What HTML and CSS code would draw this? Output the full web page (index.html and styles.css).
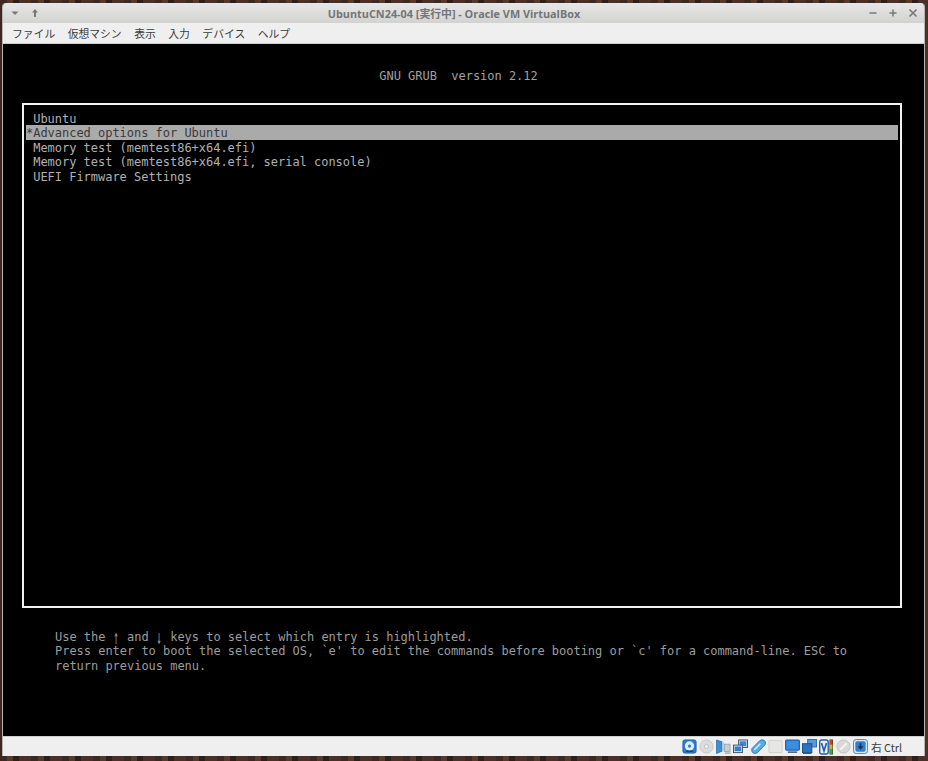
FILE: index.html
```html
<!DOCTYPE html>
<html lang="ja">
<head>
<meta charset="utf-8">
<title>UbuntuCN24-04 [実行中] - Oracle VM VirtualBox</title>
<link rel="stylesheet" href="styles.css">
</head>
<body>
<div class="window">
  <header class="titlebar">
    <div class="wm-left">
      <svg class="wm" viewBox="0 0 10 10"><path d="M1.500 3.500h7L5 7z" fill="#77797c"/></svg>
      <svg class="wm" viewBox="0 0 10 10"><path d="M5 1L8 4.500H6V9H4V4.500H2z" fill="#77797c"/></svg>
    </div>
    <div class="title">UbuntuCN24-04 [実行中] - Oracle VM VirtualBox</div>
    <div class="wm-right">
      <svg class="wm" viewBox="0 0 10 10"><path d="M1.500 5h7" stroke="#77797c" stroke-width="1.500"/></svg>
      <svg class="wm" viewBox="0 0 10 10"><path d="M1.500 5h7M5 1.500v7" stroke="#77797c" stroke-width="1.500"/></svg>
      <svg class="wm" viewBox="0 0 10 10"><path d="M1.500 1.500l7 7M8.500 1.500l-7 7" stroke="#77797c" stroke-width="1.700"/></svg>
    </div>
  </header>
  <nav class="menubar">
    <span>ファイル</span><span>仮想マシン</span><span>表示</span><span>入力</span><span>デバイス</span><span>ヘルプ</span>
  </nav>
  <main class="screen">
    <div class="grub-title">GNU GRUB  version 2.12</div>
    <section class="menu-box">
      <div class="entry">Ubuntu</div>
      <div class="entry selected">*Advanced options for Ubuntu</div>
      <div class="entry">Memory test (memtest86+x64.efi)</div>
      <div class="entry">Memory test (memtest86+x64.efi, serial console)</div>
      <div class="entry">UEFI Firmware Settings</div>
    </section>
    <div class="help">Use the <span class="arrow">↑</span> and <span class="arrow">↓</span> keys to select which entry is highlighted.
Press enter to boot the selected OS, `e' to edit the commands before booting or `c' for a command-line. ESC to
return previous menu.</div>
  </main>
  <footer class="statusbar">
    <svg class="ico" viewBox="0 0 16 16"><rect x="1" y="1" width="14" height="14" rx="2" fill="#2f7fd0" stroke="#1c5ea8"/><circle cx="8" cy="7.500" r="5" fill="#dcebf8"/><circle cx="8" cy="7.500" r="1.700" fill="#2f7fd0"/><path d="M4 13h8" stroke="#123f7c" stroke-width="1.500"/></svg>
    <svg class="ico" viewBox="0 0 16 16"><circle cx="8" cy="8" r="7" fill="#dcdcda" stroke="#c8c8c6"/><circle cx="8" cy="8" r="2.200" fill="#f2f2f0" stroke="#bdbdbb"/></svg>
    <svg class="ico" viewBox="0 0 16 16"><path d="M0.500 1l6 2v10l-6 2.500z" fill="#3d8ed8" stroke="#1f639f" stroke-width=".7"/><path d="M6.500 3h2v10h-2z" fill="#a9cde9"/><rect x="9" y="5.500" width="6" height="8" fill="#c9cdd0" stroke="#8d9599" stroke-width=".7"/><path d="M9.500 15h6" stroke="#7b8a96"/></svg>
    <svg class="ico" viewBox="0 0 16 16"><rect x="6" y="1" width="9.500" height="8" fill="#cfe0ef" stroke="#3f4d5c"/><rect x="7.200" y="2.500" width="7" height="5" fill="#3b86d3"/><rect x="0.500" y="6.500" width="9.500" height="8" fill="#dfe8f0" stroke="#3f4d5c"/><rect x="1.700" y="8" width="7" height="5" fill="#2f7fd0"/></svg>
    <svg class="ico" viewBox="0 0 16 16"><path d="M0.800 10.500L9 2q2.500-2 5-.6t1 4.600L7 14.500q-2.500 1.500-4.500.5t-1.700-4.500z" fill="#57ace6" stroke="#2b75b5"/><path d="M3.500 11.500l6.500-6.500" stroke="#d8eefb" stroke-width="1.500"/></svg>
    <svg class="ico" viewBox="0 0 16 16"><rect x="1" y="1.500" width="14" height="13" rx="1" fill="#e6e6e4" stroke="#cfcfcd"/></svg>
    <svg class="ico" viewBox="0 0 16 16"><rect x="0.500" y="1" width="15" height="11" rx="1" fill="#2f7fd0" stroke="#1c5ea8"/><rect x="2" y="2.500" width="12" height="8" fill="#3a8fe2"/><path d="M3 14h10" stroke="#34506c" stroke-width="1.500"/></svg>
    <svg class="ico" viewBox="0 0 16 16"><rect x="6" y="0.500" width="9.500" height="8" fill="#5b97d4" stroke="#2d6cab"/><rect x="0.500" y="5" width="10" height="9.500" fill="#2872bf" stroke="#174f8c"/><path d="M1 15.500h9" stroke="#2c4a68"/></svg>
    <svg class="ico-wide" viewBox="0 0 14 16"><rect x="0.700" y="1" width="8.500" height="14" rx="2" fill="#e8eff7" stroke="#2a5fa8" stroke-width="1.400"/><path d="M2.500 4l2.500 8 2.500-8" fill="none" stroke="#2a5fa8" stroke-width="1.700"/><rect x="10.500" y="0.500" width="3.500" height="15" fill="#333"/><rect x="11" y="1" width="2.500" height="4.500" fill="#c9402c"/><rect x="11" y="5.500" width="2.500" height="4.500" fill="#dcae2c"/><rect x="11" y="10" width="2.500" height="5" fill="#4aa23c"/></svg>
    <svg class="ico" viewBox="0 0 16 16"><circle cx="8" cy="8" r="7" fill="#d9d9d7" stroke="#c4c4c2"/><path d="M4.500 11.500l7-7" stroke="#f2f2f0" stroke-width="2.500"/></svg>
    <svg class="ico" viewBox="0 0 16 16"><rect x="0.500" y="0.500" width="15" height="15" rx="3" fill="#d6e7f6" stroke="#3b86cf"/><rect x="2.500" y="2.500" width="11" height="11" rx="2" fill="#2f7fd0"/><path d="M8 4.500v4" stroke="#12315a" stroke-width="1.800"/><path d="M5 7.800h6L8 11.500z" fill="#12315a"/></svg>
    <span class="hostkey">右 Ctrl</span>
  </footer>
</div>
</body>
</html>
```
FILE: styles.css
```css
html, body {
  margin: 0;
  padding: 0;
  height: 100%;
}
body {
  background: repeating-linear-gradient(90deg, #3d2822 0 7px, #57392c 7px 13px, #2f1f1b 13px 19px, #4a3026 19px 31px);
  overflow: hidden;
  padding: 3px 3px 5px 2px;
  box-sizing: border-box;
  width: 928px;
  height: 761px;
}
.window {
  height: 753px;
  display: flex;
  flex-direction: column;
  border-radius: 4px 4px 0 0;
  border-left: 1px solid #b9b4b1;
  border-right: 1px solid #b9b4b1;
  overflow: hidden;
  font-family: "Noto Sans CJK JP", "Noto Sans", sans-serif;
}
.titlebar {
  height: 20px;
  flex: none;
  display: flex;
  align-items: center;
  justify-content: space-between;
  position: relative;
  padding: 0 6px 0 7px;
  background: linear-gradient(#e7e7e7, #d2d2d0);
}
.wm-left, .wm-right {
  display: flex;
  align-items: center;
  gap: 10px;
}
.wm {
  width: 10px;
  height: 10px;
  display: block;
}
.title {
  position: absolute;
  left: 0;
  right: 0;
  top: 1px;
  padding-right: 19px;
  text-align: center;
  font-family: "Open Sans", "Noto Sans CJK SC", sans-serif;
  font-size: 10.850px;
  line-height: 20px;
  font-weight: 700;
  color: #737578;
}
.menubar {
  height: 20px;
  flex: none;
  display: flex;
  align-items: center;
  gap: 12.500px;
  padding: 0 0 0 9px;
  background: #efefef;
  border-bottom: 1px solid #c8c8c6;
  font-size: 10.800px;
  color: #3c3c3c;
}
.screen {
  flex: 1;
  min-height: 0;
  background: #000;
  color: #aaa;
  font-family: "DejaVu Sans Mono", "Liberation Mono", monospace;
  font-size: 12px;
  letter-spacing: -0.024px;
  line-height: 14.400px;
  padding: 25px 22px 0 19px;
  display: flex;
  flex-direction: column;
}
.grub-title {
  white-space: pre;
  text-align: center;
  height: 34px;
  padding-right: 7px;
  color: #a0a0a0;
}
.menu-box {
  height: 495px;
  flex: none;
  border: 2px solid #f2f2f2;
  padding: 6px 2px 0 2px;
  color: #b0b0b0;
}
.entry {
  height: 14.400px;
  line-height: 16.400px;
  padding-left: 7.200px;
  white-space: pre;
}
.selected {
  padding-left: 0;
  background: #aaa;
  color: #3a3a3a;
}
.help {
  margin: 22px 0 0 33px;
  white-space: pre-wrap;
  width: 810px;
  color: #9c9c9c;
}
.arrow {
  display: inline-block;
  width: 6px;
  margin: 0 0.600px;
  text-align: center;
  text-indent: -0.600px;
  transform: scale(0.7, 1.7);
}
.statusbar {
  height: 20px;
  flex: none;
  display: flex;
  align-items: center;
  justify-content: flex-end;
  gap: 2.200px;
  padding-right: 22px;
  background: #efefef;
  border-top: 1px solid #cfcfcd;
  box-sizing: border-box;
}
.ico {
  width: 15px;
  height: 15px;
  display: block;
}
.ico-wide {
  width: 14px;
  height: 16px;
  display: block;
}
.hostkey {
  font-size: 10.800px;
  color: #3c3c3c;
  margin-left: 1px;
  white-space: pre;
}
```
